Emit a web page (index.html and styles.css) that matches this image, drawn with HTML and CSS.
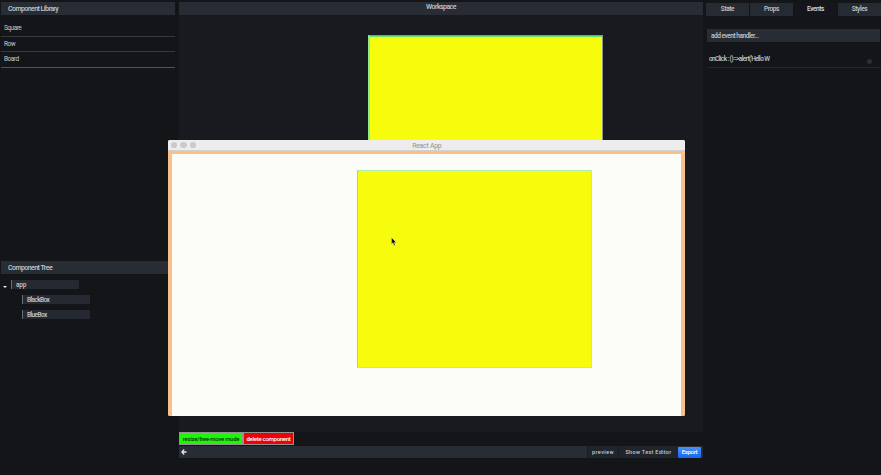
FILE: index.html
```
<!DOCTYPE html>
<html lang="en">
<head>
<meta charset="utf-8">
<title>Workspace</title>
<link rel="stylesheet" href="styles.css">
</head>
<body>
<div class="app">
  <aside class="left">
    <section class="library">
      <h2 class="bar">Component Library</h2>
      <ul class="components">
        <li>Square</li>
        <li>Row</li>
        <li>Board</li>
      </ul>
    </section>
    <section class="tree">
      <h2 class="bar">Component Tree</h2>
      <div class="node root"><i class="caret"></i><span>app</span></div>
      <div class="node child"><span>BlackBox</span></div>
      <div class="node child"><span>BlueBox</span></div>
    </section>
  </aside>
  <main class="center">
    <h2 class="bar title">Workspace</h2>
    <div class="canvas"><div class="shape"></div></div>
    <div class="actions">
      <button class="mode">resize/free-move mode</button>
      <button class="delete">delete component</button>
    </div>
    <footer class="footer">
      <svg class="back" viewBox="0 0 6 6"><path d="M3.2.5.8 3l2.4 2.5M1 3h4.5" /></svg>
      <span class="link preview">preview</span>
      <span class="link editor">Show Text Editor</span>
      <button class="export">Export</button>
    </footer>
  </main>
  <aside class="right">
    <nav class="tabs">
      <span>State</span><span>Props</span><span class="active">Events</span><span>Styles</span>
    </nav>
    <div class="field">add event handler...</div>
    <div class="event"><span>onClick : ()=&gt;alert('Hello W</span><i class="remove"></i></div>
  </aside>
</div>
<div class="window">
  <div class="titlebar"><i></i><i></i><i></i><span>React App</span></div>
  <div class="page"><div class="box"></div></div>
</div>
<svg class="cursor" viewBox="0 0 6 9"><path d="M.5.5v6.6l1.5-1.3 1 2.6 1.2-.5-1-2.5h2z" /></svg>
</body>
</html>
```
FILE: styles.css
```
* { box-sizing: border-box; }
body {
  margin: 0;
  width: 881px;
  height: 475px;
  overflow: hidden;
  background: #131519;
  color: #c6c8cc;
  font: 500 7px/9px Roboto, "Liberation Sans", sans-serif;
}
h2, ul { margin: 0; padding: 0; font-size: inherit; font-weight: 400; list-style: none; }
button { margin: 0; padding: 0; border: 0; font: inherit; white-space: nowrap; }
.app {
  display: grid;
  grid-template-columns: 174px 524px 174px;
  column-gap: 4px;
  height: 475px;
  padding: 2px 0 0 1px;
}
.left, .center, .right { min-width: 0; }
.bar {
  height: 13px;
  padding-left: 7px;
  background: #272c35;
  font-weight: 500;
  line-height: 14px;
  letter-spacing: -0.56px;
}
.library { height: 259px; }
.components { padding-top: 6px; }
.components li {
  height: 15.6px;
  padding-left: 3px;
  border-bottom: 1px solid #363941;
  font-size: 6.5px;
  line-height: 14px;
  letter-spacing: -0.5px;
}
.components li:last-child { border-color: #50535a; }
.node {
  display: flex;
  height: 9px;
  margin-bottom: 6px;
  font-size: 6.5px;
  line-height: 10px;
  letter-spacing: -0.6px;
}
.node span {
  width: 68px;
  padding-left: 4px;
  border-left: 1px solid #686d77;
  background: #242932;
}
.root { margin-top: 6px; letter-spacing: -0.25px; }
.child { padding-left: 21px; }
.caret {
  width: 4px;
  margin: 6px 4px 0 2px;
  border: solid transparent;
  border-width: 2px 2px 0;
  border-top-color: #f0f0f0;
  height: 2px;
}
.center { display: flex; flex-direction: column; }
.title {
  flex: none;
  padding: 0;
  text-align: center;
  line-height: 11px;
  letter-spacing: -0.56px;
}
.canvas { height: 417px; background: #181a20; padding: 20px 0 0 189px; }
.shape {
  width: 235px;
  height: 197px;
  background: #f7fb0c;
  border: 1px solid #8c9691;
  border-left: 2px solid #8eed8b;
  box-shadow: inset 0 1px #68e36f;
}
.actions { display: flex; height: 13px; margin-bottom: 1px; font-size: 6px; line-height: 10px; }
.actions button { height: 13px; border: 1px solid #929292; }
.mode { width: 64px; background: #20f40a; color: #07330a; letter-spacing: -0.29px; }
.delete { width: 51px; background: #e90408; color: #fff; letter-spacing: -0.27px; }
.footer {
  display: flex;
  align-items: center;
  height: 12px;
  padding: 0 2px 0 2px;
  background: #272c35;
  font-size: 5.5px;
}
.back { width: 6px; height: 6px; fill: none; stroke: #dfe2e7; stroke-width: 1.3; }
.link {
  height: 12px;
  line-height: 12px;
  background: #20242c;
  border-left: 1px solid #191c23;
  text-align: center;
  letter-spacing: 0.4px;
  white-space: nowrap;
}
.preview { width: 31px; margin-left: auto; }
.editor { width: 60px; letter-spacing: 0.3px; }
.export {
  width: 23px;
  height: 11px;
  border-radius: 1px;
  background: linear-gradient(#4b91f6, #1465f5);
  color: #fff;
  font-size: 6px;
  line-height: 10px;
  letter-spacing: -0.3px;
}
.tabs { display: flex; gap: 1px; height: 14px; margin-left: -1px; padding-top: 1px; }
.tabs span {
  width: 43px;
  background: #252a33;
  line-height: 13px;
  text-align: center;
  font-size: 6.5px;
  letter-spacing: -0.4px;
}
.tabs .active { background: #14161b; color: #dedfe2; }
.field {
  height: 13px;
  margin: 13px 1px 0 0;
  padding-left: 4px;
  background: #272c35;
  font-size: 6.5px;
  line-height: 14px;
  letter-spacing: -0.46px;
}
.event {
  display: flex;
  justify-content: space-between;
  height: 26px;
  padding: 13px 9px 0 2px;
  border-bottom: 1px solid #22252b;
  font-size: 6.5px;
  letter-spacing: -0.6px;
}
.remove { width: 5px; height: 5px; margin-top: 4px; border-radius: 50%; background: #2a2f39; }
.window {
  position: absolute;
  left: 168px;
  top: 140px;
  width: 517px;
  height: 276px;
  border-radius: 2px;
  overflow: hidden;
  background: #fcfcf9;
}
.titlebar {
  display: flex;
  align-items: center;
  gap: 3px;
  height: 11px;
  padding-left: 3px;
  background: #ededee;
  border-bottom: 1px solid #d6d0cb;
  color: #929292;
  font-weight: 400;
  letter-spacing: -0.3px;
}
.titlebar i { width: 6.4px; height: 6px; border-radius: 50%; background: #cacaca; }
.titlebar span { margin: 1px 0 0 213px; line-height: 10px; }
.page {
  height: 265px;
  padding: 16px 0 0 185px;
  border: 4px solid #f8c18b;
  border-width: 3px 4px 0;
}
.box {
  width: 235px;
  height: 198px;
  background: #f7fb0c;
  border: 1px solid #c9ea83;
  border-top-color: #aeeeb0;
  border-left-color: #a5e82d;
}
.cursor {
  position: absolute;
  left: 391px;
  top: 237px;
  width: 6px;
  height: 9px;
  fill: #12121c;
  stroke: #e8e8d8;
  stroke-width: .4;
}
```
